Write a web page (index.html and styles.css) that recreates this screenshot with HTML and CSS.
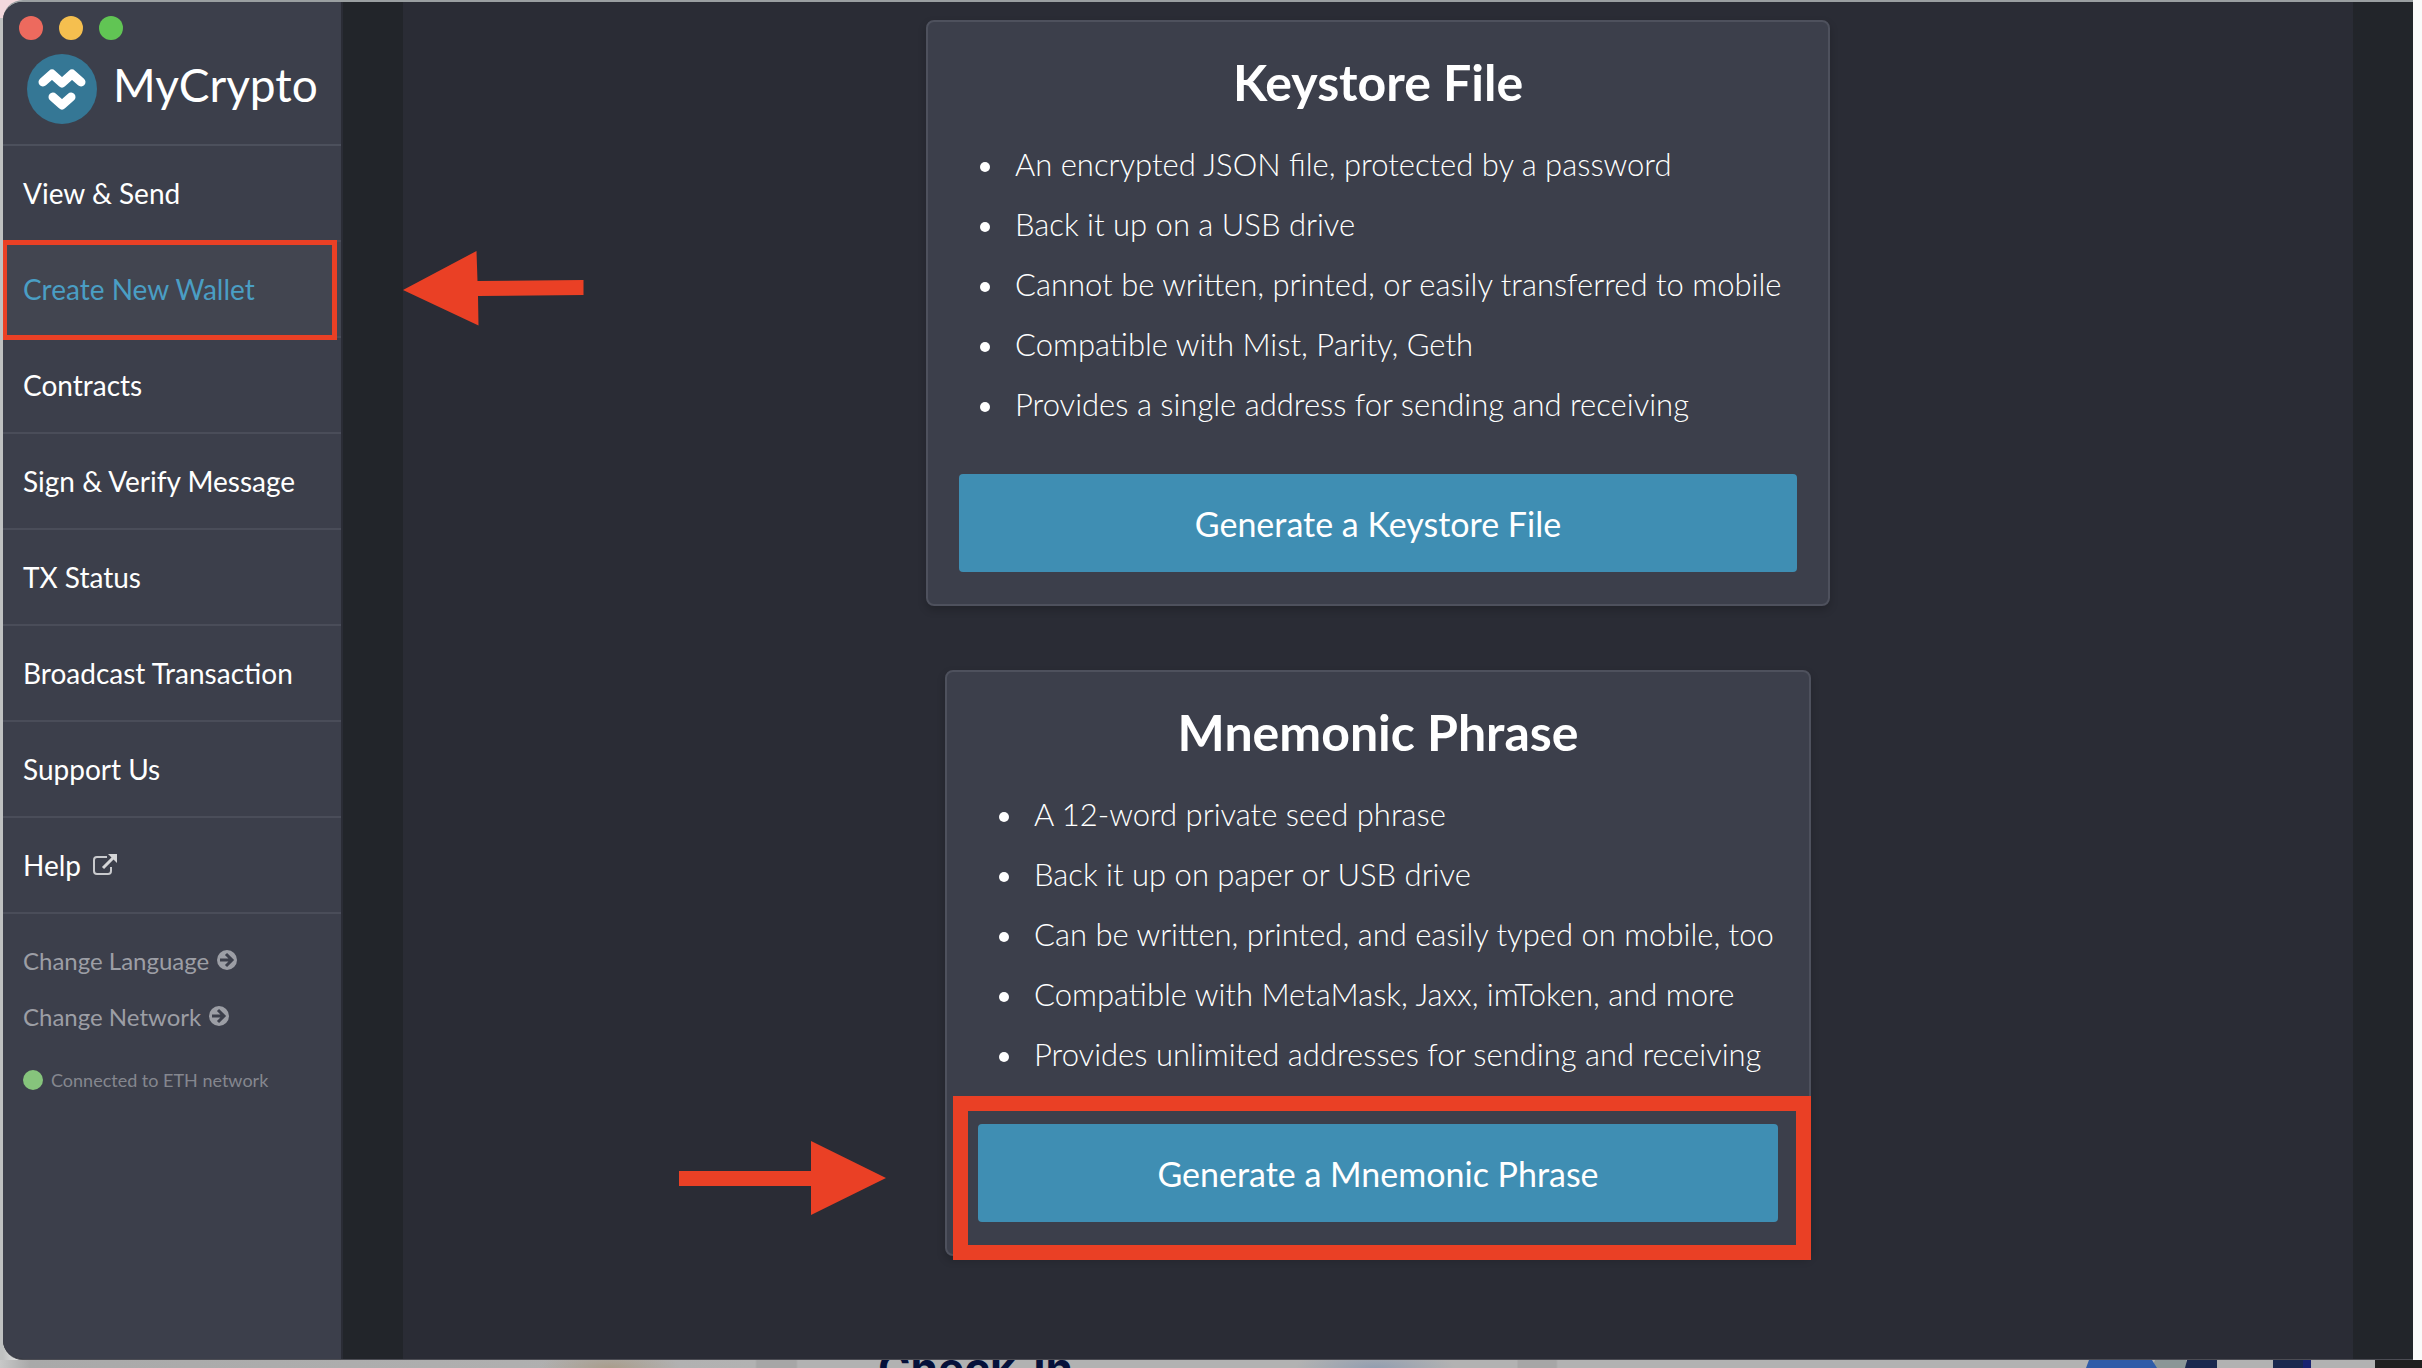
FILE: index.html
```html
<!DOCTYPE html>
<html lang="en">
<head>
<meta charset="utf-8">
<title>MyCrypto</title>
<link rel="stylesheet" href="styles.css">
</head>
<body>
<div class="desktop">
  <div class="window">
    <aside class="sidebar">
      <div class="controls">
        <button class="control control-close" aria-label="Close"></button>
        <button class="control control-minimize" aria-label="Minimize"></button>
        <button class="control control-zoom" aria-label="Zoom"></button>
      </div>
      <div class="brand">
        <svg class="brand-mark" viewBox="0 0 70 70" aria-hidden="true">
          <circle cx="35" cy="35" r="35" fill="#357795"/>
          <path d="M16 28L25 20L35 29L45 20L54 28M26 43L35 51L44 43" fill="none" stroke="#fff" stroke-width="9" stroke-linecap="round" stroke-linejoin="round"/>
        </svg>
        <span class="brand-name">MyCrypto</span>
      </div>
      <nav class="nav">
        <a class="nav-link" href="#">View &amp; Send</a>
        <a class="nav-link nav-active" href="#">Create New Wallet</a>
        <a class="nav-link" href="#">Contracts</a>
        <a class="nav-link" href="#">Sign &amp; Verify Message</a>
        <a class="nav-link" href="#">TX Status</a>
        <a class="nav-link" href="#">Broadcast Transaction</a>
        <a class="nav-link" href="#">Support Us</a>
        <a class="nav-link" href="#">Help
          <svg class="external" viewBox="0 0 24 22" aria-hidden="true">
            <path d="M14 3H4Q1 3 1 6V17Q1 20 4 20H15Q18 20 18 17V13" fill="none" stroke="#c9cacd" stroke-width="2"/>
            <path d="M10 14L20 4" stroke="#d5d6d8" stroke-width="3" fill="none"/>
            <path d="M15 0H24V9Z" fill="#d5d6d8"/>
          </svg>
        </a>
      </nav>
      <div class="options">
        <button class="option">Change Language
          <svg class="circle-arrow" viewBox="0 0 20 20" aria-hidden="true"><circle cx="10" cy="10" r="10" fill="#9c9ea5"/><path d="M3 10H15M9 4L15 10L9 16" fill="none" stroke="#3c3f4b" stroke-width="3"/></svg>
        </button>
        <button class="option">Change Network
          <svg class="circle-arrow" viewBox="0 0 20 20" aria-hidden="true"><circle cx="10" cy="10" r="10" fill="#9c9ea5"/><path d="M3 10H15M9 4L15 10L9 16" fill="none" stroke="#3c3f4b" stroke-width="3"/></svg>
        </button>
      </div>
      <p class="status"><span class="status-dot"></span>Connected to ETH network</p>
    </aside>
    <main class="content">
      <section class="card card-keystore">
        <h2 class="card-title">Keystore File</h2>
        <ul class="card-list">
          <li>An encrypted JSON file, protected by a password</li>
          <li>Back it up on a USB drive</li>
          <li>Cannot be written, printed, or easily transferred to mobile</li>
          <li>Compatible with Mist, Parity, Geth</li>
          <li>Provides a single address for sending and receiving</li>
        </ul>
        <button class="generate">Generate a Keystore File</button>
      </section>
      <section class="card card-mnemonic">
        <h2 class="card-title">Mnemonic Phrase</h2>
        <ul class="card-list">
          <li>A 12-word private seed phrase</li>
          <li>Back it up on paper or USB drive</li>
          <li>Can be written, printed, and easily typed on mobile, too</li>
          <li>Compatible with MetaMask, Jaxx, imToken, and more</li>
          <li>Provides unlimited addresses for sending and receiving</li>
        </ul>
        <button class="generate">Generate a Mnemonic Phrase</button>
        <span class="highlight-box"></span>
        <svg class="arrow-right" viewBox="0 0 207 76" aria-hidden="true"><path d="M0 31H132V1L207 38L132 75V46H0Z" fill="#ea4025"/></svg>
      </section>
      <svg class="arrow-left" viewBox="0 0 181 75" aria-hidden="true"><path d="M0 39L73.500 0L74.500 30L180.500 29V44L75 45L75.500 74.500Z" fill="#ea4025"/></svg>
    </main>
  </div>
  <div class="backdrop">
    <span class="backdrop-title">Check-in</span>
    <svg class="backdrop-art" viewBox="0 0 336 8" aria-hidden="true">
      <path d="M69 0H100V8H66Z" fill="#8a9696"/>
      <path d="M3 0H66L71 8H0Z" fill="#2f5ca8"/>
      <path d="M101 0H131V8H99Z" fill="#1a284e"/>
      <path d="M187 0H217V8H187Z" fill="#1a284e"/>
      <path d="M217 0H225V8H217Z" fill="#192270"/>
      <path d="M289 0H336V8H289Z" fill="#202020"/>
    </svg>
  </div>
</div>
</body>
</html>
```
FILE: styles.css
```css
* {
  box-sizing: border-box;
}

body {
  margin: 0;
  font-family: Lato, sans-serif;
  color: #fff;
  background: #fafafa;
}

button {
  border: 0;
  margin: 0;
  padding: 0;
  font: inherit;
  color: inherit;
  background: none;
}

.desktop {
  min-height: 100vh;
  display: flex;
  flex-direction: column;
  overflow: hidden;
  background:
    linear-gradient(#f3d9dd, #f3d9dd) 0 0 / 20px 18px no-repeat,
    linear-gradient(90deg, #bfc1c1 0 3px, #fafafa 30px);
}

.window {
  flex: 1;
  display: flex;
  margin: 0 9px 0 3px;
  border-top: 2px solid #9a9fa1;
  border-bottom: 1px solid #4b4c53;
  border-radius: 20px 0 0 20px;
  overflow: hidden;
  background: #22252a;
}

.sidebar {
  flex: 0 0 340px;
  border-right: 2px solid #2a2c35;
  background: #3c3f4b;
}

.controls {
  display: flex;
  gap: 16px;
  padding: 14px 16px 0;
}

.control {
  width: 24px;
  height: 24px;
  border-radius: 50%;
}

.control-close { background: #ed6a5e; }
.control-minimize { background: #f5bf4f; }
.control-zoom { background: #61c554; }

.brand {
  display: flex;
  align-items: center;
  gap: 16px;
  height: 106px;
  padding: 0 0 6px 24px;
  border-bottom: 2px solid #4c505c;
}

.brand-mark {
  width: 70px;
  height: 70px;
}

.brand-name {
  padding-bottom: 8px;
  font-size: 46px;
  line-height: 60px;
}

.nav-link {
  display: flex;
  align-items: center;
  gap: 12px;
  height: 96px;
  padding: 0 20px;
  border-bottom: 2px solid #4a4d59;
  font-size: 28px;
  color: #fff;
  text-decoration: none;
}

.nav-active {
  position: relative;
  color: #4a9ec4;
  background: #424550;
}

/* Callout drawn around the current entry */
.nav-active::after {
  content: "";
  position: absolute;
  inset: -2px 4px -4px -1px;
  border: 5px solid #ea4025;
}

.external {
  width: 24px;
  height: 22px;
}

.options {
  padding: 18px 20px 0;
}

.option {
  display: flex;
  align-items: center;
  gap: 8px;
  height: 56px;
  font-size: 24px;
  color: #9c9ea5;
}

.circle-arrow {
  width: 20px;
  height: 20px;
}

.status {
  display: flex;
  align-items: center;
  gap: 8px;
  margin: 24px 20px;
  font-size: 18px;
  line-height: 24px;
  color: #85878f;
}

.status-dot {
  width: 20px;
  height: 20px;
  border-radius: 50%;
  background: #86c47c;
}

.content {
  position: relative;
  flex: 1;
  display: flex;
  flex-direction: column;
  align-items: center;
  gap: 64px;
  margin: 0 60px;
  padding: 18px 0;
  background: #2a2c35;
}

.card {
  position: relative;
  max-width: 100%;
  padding: 30px 31px 32px;
  border: 2px solid #4e515d;
  border-radius: 8px;
  background: #3c3f4b;
  box-shadow: 0 4px 8px rgba(0, 0, 0, 0.2);
}

.card-keystore { width: 904px; }
.card-mnemonic { width: 866px; }

.card-title {
  margin: 0 0 22px;
  font-size: 50px;
  line-height: 60px;
  font-weight: 700;
  text-align: center;
}

.card-list {
  margin: 0 0 40px;
  padding-left: 21px;
  list-style: none;
  font-size: 31px;
  line-height: 60px;
  font-weight: 300;
}

.card-list li {
  display: flex;
  align-items: center;
  gap: 25px;
}

.card-list li::before {
  content: "";
  flex: none;
  width: 10px;
  height: 10px;
  margin-top: 6px;
  border-radius: 50%;
  background: #fff;
}

.generate {
  display: block;
  width: 100%;
  height: 98px;
  border-radius: 4px;
  font-size: 34px;
  background: #3f8eb3;
}

.highlight-box {
  position: absolute;
  left: 6px;
  right: -2px;
  bottom: -6px;
  height: 164px;
  border: 15px solid #ea4025;
}

.arrow-right {
  position: absolute;
  right: calc(100% + 61px);
  bottom: 38px;
  width: 207px;
  height: 76px;
}

.arrow-left {
  position: absolute;
  left: 0;
  top: 249px;
  width: 181px;
  height: 75px;
}

/* Strip of the page visible behind the window */
.backdrop {
  display: flex;
  justify-content: space-between;
  height: 8px;
  padding-left: 878px;
  overflow: hidden;
  background:
    radial-gradient(ellipse 70px 20px at 610px 8px, #a99d8c, transparent),
    radial-gradient(ellipse 80px 20px at 1375px 8px, #929eb0, transparent),
    linear-gradient(90deg, #c8c8c8, #a9a9a9 30px, #b2b2b2 755px, #a6a6a6 757px 796px, #b2b2b2 798px 1517px, #a6a6a6 1518px 1556px, #b2b2b2 1558px);
}

.backdrop-title {
  margin-top: -16px;
  font: 700 44px/48px Inter, sans-serif;
  color: #05103a;
}

.backdrop-art {
  width: 336px;
  height: 8px;
}
```
